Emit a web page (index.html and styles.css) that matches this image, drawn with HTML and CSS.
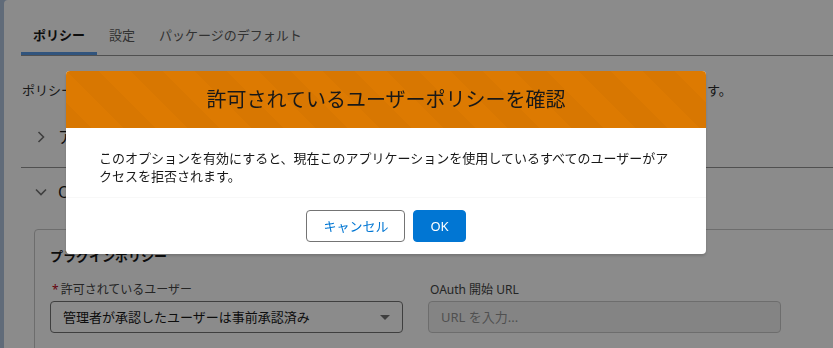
FILE: index.html
```html
<!DOCTYPE html>
<html lang="ja">
<head>
    <meta charset="UTF-8" />
    <meta name="viewport" content="width=device-width, initial-scale=1" />
    <link rel="stylesheet" href="styles.css">
</head>
<body>
    <div class="page">
        <div class="card">
            <div class="tabs">
                <button class="active">ポリシー</button>
                <button>設定</button>
                <button>パッケージのデフォルト</button>
            </div>

            <p class="intro">ポリシーを使用して、接続アプリケーションにアクセスできるユーザーと、各ユーザーがアクセスする方法を制御します。</p>

            <div class="section">
                <div class="summary">
                    <svg class="chev" width="12" height="12" viewBox="0 0 12 12"><path d="M3.5 1 L8.5 6 L3.5 11" fill="none" stroke="#747474" stroke-width="1.6"/></svg>
                    <span>アプリケーションポリシー</span>
                </div>
            </div>

            <div class="section open">
                <div class="summary">
                    <svg class="chev" width="12" height="12" viewBox="0 0 12 12"><path d="M1 3.5 L6 8.5 L11 3.5" fill="none" stroke="#747474" stroke-width="1.6"/></svg>
                    <span>OAuth ポリシー</span>
                </div>
                <div class="box">
                    <h3>プラグインポリシー</h3>
                    <div class="fields">
                        <div class="field">
                            <label><abbr>*</abbr>許可されているユーザー</label>
                            <div class="select">
                                <span>管理者が承認したユーザーは事前承認済み</span>
                                <i class="caret"></i>
                            </div>
                        </div>
                        <div class="field">
                            <label>OAuth 開始 URL</label>
                            <input type="text" placeholder="URL を入力..." disabled />
                        </div>
                    </div>
                </div>
            </div>
        </div>
    </div>

    <div class="backdrop"></div>
    <div class="modal-wrap">
        <div class="modal">
            <header class="modal-header">
                <h2>許可されているユーザーポリシーを確認</h2>
            </header>
            <div class="modal-body">
                このオプションを有効にすると、現在このアプリケーションを使用しているすべてのユーザーがアクセスを拒否されます。
            </div>
            <footer class="modal-footer">
                <button class="btn-neutral">キャンセル</button>
                <button class="btn-brand">OK</button>
            </footer>
        </div>
    </div>
</body>
</html>
```

FILE: styles.css
```css
* {
    box-sizing: border-box;
    margin: 0;
    padding: 0;
}

body {
    font-family: 'Noto Sans', 'Noto Sans CJK JP', sans-serif;
    background-color: #b0c4df;
    color: #181818;
    font-size: 13px;
    line-height: 18px;
    overflow: hidden;
    height: 348px;
}

.page {
    padding-left: 4px;
}

.card {
    background: #fff;
    border-radius: 4px;
    margin-right: -80px;
    min-height: 360px;
    padding: 15px 0 0 17px;
}

.tabs {
    display: flex;
    border-bottom: 1px solid #939393;
}

.tabs button {
    font: inherit;
    background: none;
    border: none;
    padding: 0 12px;
    line-height: 40px;
    color: #5c5c5c;
}

.tabs button.active {
    font-weight: bold;
    color: #181818;
    box-shadow: inset 0 -3px 0 #5a9be6;
}

.intro {
    margin: 25px 0 14px 1px;
    color: #2e2e2e;
    white-space: nowrap;
}

.section {
    padding: 8px 0 14px;
    border-bottom: 1px solid #939393;
}

.section.open {
    border-bottom: none;
}

.summary {
    display: flex;
    align-items: center;
    height: 32px;
    font-size: 16px;
    padding-left: 14px;
}

.summary .chev {
    margin-right: 11px;
}

.box {
    margin: 21px 0 0 13px;
    border: 1px solid #c9c9c9;
    border-radius: 4px;
    padding: 16px 15px 40px;
}

.box h3 {
    font-size: 13px;
    line-height: 20px;
    font-weight: bold;
}

.fields {
    display: grid;
    grid-template-columns: 353px 353px;
    column-gap: 25px;
    margin-top: 15px;
}

.field label {
    display: block;
    font-size: 12px;
    line-height: 18px;
    color: #444;
    margin-bottom: 2px;
    padding-left: 2px;
}

.field abbr {
    color: #ba0517;
    text-decoration: none;
    margin-right: 2px;
}

.select {
    display: flex;
    align-items: center;
    justify-content: space-between;
    height: 32px;
    border: 1px solid #747474;
    border-radius: 4px;
    padding: 0 6px 0 12px;
}

.caret {
    width: 0;
    height: 0;
    border-left: 5px solid transparent;
    border-right: 5px solid transparent;
    border-top: 5px solid #747474;
    margin-right: 6px;
}

.field input {
    width: 100%;
    height: 32px;
    font: inherit;
    border: 1px solid #c9c9c9;
    border-radius: 4px;
    background: #f3f3f3;
    padding: 0 12px;
}

.field input::placeholder {
    color: #939393;
}

.backdrop {
    position: fixed;
    inset: 0;
    background: rgba(0, 0, 0, 0.455);
}

.modal-wrap {
    position: fixed;
    inset: 0;
    padding: 71px 0 0 66px;
}

.modal {
    width: 640px;
    border-radius: 4px;
    background: #fff;
    box-shadow: 0 2px 3px rgba(0, 0, 0, 0.16);
}

.modal-header {
    height: 57px;
    display: flex;
    align-items: center;
    justify-content: center;
    border-radius: 4px 4px 0 0;
    background-color: #dd7a01;
    background-image: linear-gradient(45deg, rgba(0, 0, 0, 0.025) 25%, transparent 25%, transparent 50%, rgba(0, 0, 0, 0.025) 50%, rgba(0, 0, 0, 0.025) 75%, transparent 75%, transparent);
    background-size: 64px 64px;
}

.modal-header h2 {
    font-size: 20px;
    font-weight: normal;
    line-height: 25px;
    color: #181818;
}

.modal-body {
    padding: 21px 33px 12px;
    color: #181818;
}

.modal-footer {
    border-top: 1px solid #f8f8f8;
    padding: 12px;
    display: flex;
    justify-content: center;
    gap: 8px;
}

.modal-footer button {
    font: inherit;
    height: 32px;
    padding: 0 16px;
    border-radius: 4px;
    cursor: pointer;
}

.btn-neutral {
    background: #fff;
    border: 1px solid #747474;
    color: #0176d3;
}

.btn-brand {
    background: #0176d3;
    border: 1px solid #0176d3;
    color: #fff;
}
```
